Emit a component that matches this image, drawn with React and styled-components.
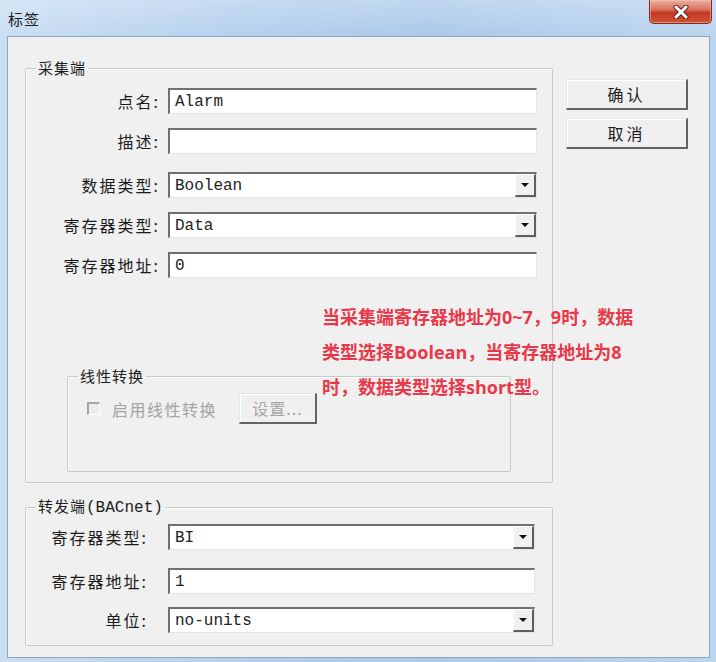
import React from 'react';
import styled, { createGlobalStyle } from 'styled-components';

const GlobalStyle = createGlobalStyle`
  html, body {
    margin: 0;
    padding: 0;
  }
  body {
    width: 716px;
    height: 662px;
    overflow: hidden;
    font-family: "Noto Sans CJK SC", "DejaVu Sans", sans-serif;
  }
`;

const Window = styled.div`
  width: 716px;
  height: 662px;
  box-sizing: border-box;
  display: flex;
  flex-direction: column;
  padding: 0 6px 4px 7px;
  background:
    linear-gradient(180deg, rgba(255,255,255,0.25) 0, rgba(255,255,255,0) 36px),
    linear-gradient(90deg, #cadef3 0%, #b4cfed 35%, #acc9ea 60%, #bcd4ef 100%);
`;

const TitleBar = styled.div`
  height: 36px;
  display: flex;
  justify-content: space-between;
  align-items: flex-start;
`;

const Title = styled.div`
  align-self: center;
  margin-left: 1px;
  font-size: 15px;
  letter-spacing: 1px;
  color: #1c1c1c;
`;

const CloseButton = styled.div`
  width: 63px;
  height: 24px;
  margin-right: -2px;
  box-sizing: border-box;
  border: 1px solid #7e2a20;
  border-top: none;
  border-radius: 0 0 5px 5px;
  background: linear-gradient(180deg, #eab0a2 0%, #d9705b 42%, #c13a22 55%, #cf5337 100%);
  box-shadow: inset 0 0 0 1px rgba(255, 200, 190, 0.5);
  display: flex;
  align-items: center;
  justify-content: center;
`;

const Client = styled.div`
  flex: 1;
  position: relative;
  display: flex;
  align-items: flex-start;
  padding: 23px 0 0 17px;
  background: #f0f0f0;
  border: 1px solid #8ea4bf;
`;

const LeftColumn = styled.div`
  display: flex;
  flex-direction: column;
  width: 528px;
`;

const Group = styled.fieldset`
  margin: ${p => p.$mt || 0}px 0 0 ${p => p.$ml || 0}px;
  padding: 0 0 ${p => p.$pb}px 0;
  width: ${p => p.$w}px;
  min-width: 0;
  box-sizing: border-box;
  border: 1px solid #c9c9c9;
  border-radius: 2px;
  box-shadow: inset 1px 1px 0 #fbfbfb;
`;

const Legend = styled.legend`
  margin-left: 10px;
  padding: 0 2px;
  font-size: 15px;
  line-height: 16px;
  letter-spacing: 1px;
  color: #1c1c1c;
`;

const Mono = styled.span`
  font-family: "Liberation Mono", monospace;
  font-size: 16px;
  letter-spacing: 0;
`;

const FieldRow = styled.div`
  display: flex;
  align-items: center;
  height: 26px;
  margin-top: ${p => p.$mt}px;
`;

const FieldLabel = styled.label`
  width: ${p => p.$w}px;
  margin-right: ${p => p.$gap}px;
  text-align: right;
  font-size: 16px;
  letter-spacing: 2px;
  color: #1b1b1b;
  white-space: nowrap;
`;

const TextBox = styled.div`
  width: ${p => p.$w}px;
  height: 26px;
  box-sizing: border-box;
  display: flex;
  align-items: center;
  justify-content: space-between;
  padding-left: 5px;
  background: #fff;
  border-top: 2px solid #707070;
  border-left: 2px solid #707070;
  border-right: 1px solid #e4e4e4;
  border-bottom: 1px solid #e4e4e4;
  font-family: "Liberation Mono", monospace;
  font-size: 16px;
  color: #222;
`;

const ArrowBox = styled.div`
  width: 21px;
  height: 100%;
  box-sizing: border-box;
  display: flex;
  align-items: center;
  justify-content: center;
  background: #f0f0f0;
  border-top: 1px solid #fff;
  border-left: 1px solid #fff;
  border-right: 2px solid #5f5f5f;
  border-bottom: 2px solid #5f5f5f;
`;

const Triangle = styled.div`
  width: 0;
  height: 0;
  border-left: 4px solid transparent;
  border-right: 4px solid transparent;
  border-top: 4px solid #111;
`;

const OptionRow = styled.div`
  display: flex;
  align-items: center;
  margin: 9px 0 0 19px;
`;

const CheckBox = styled.div`
  width: 13px;
  height: 13px;
  box-sizing: border-box;
  background: #ececec;
  border-top: 2px solid #a4a4a4;
  border-left: 2px solid #a4a4a4;
  border-right: 1px solid #fff;
  border-bottom: 1px solid #fff;
`;

const OptionText = styled.span`
  margin: 0 22px 0 12px;
  font-size: 16px;
  letter-spacing: 1.5px;
  color: #a3a3a3;
`;

const PushButton = styled.div`
  width: ${p => p.$w}px;
  height: 31px;
  box-sizing: border-box;
  display: flex;
  align-items: center;
  justify-content: center;
  background: #f0f0f0;
  border-top: 1px solid #e6e6e6;
  border-left: 1px solid #e6e6e6;
  border-right: 2px solid #646464;
  border-bottom: 2px solid #646464;
  box-shadow: inset 1px 1px 0 #fff;
  font-size: 16px;
  letter-spacing: ${p => (p.$disabled ? 1 : 3)}px;
  color: ${p => (p.$disabled ? '#a6a6a6' : '#1b1b1b')};
`;

const ButtonColumn = styled.div`
  display: flex;
  flex-direction: column;
  gap: 8px;
  margin: 19px 0 0 13px;
`;

const Note = styled.div`
  position: absolute;
  left: 314px;
  top: 263px;
  font-family: "Open Sans", "Noto Sans CJK SC", sans-serif;
  font-size: 18px;
  font-weight: 700;
  line-height: 35px;
  color: #e8394b;
  white-space: nowrap;
`;

const Field = ({ label, labelW, gap, width, mt, value, combo }) => (
  <FieldRow $mt={mt}>
    <FieldLabel $w={labelW} $gap={gap}>{label}</FieldLabel>
    <TextBox $w={width}>
      <span>{value}</span>
      {combo && (
        <ArrowBox>
          <Triangle />
        </ArrowBox>
      )}
    </TextBox>
  </FieldRow>
);

const source = [
  { label: '点名:', value: 'Alarm', mt: 12 },
  { label: '描述:', value: '', mt: 14 },
  { label: '数据类型:', value: 'Boolean', mt: 18, combo: true },
  { label: '寄存器类型:', value: 'Data', mt: 14, combo: true },
  { label: '寄存器地址:', value: '0', mt: 14 },
];

const forward = [
  { label: '寄存器类型:', value: 'BI', mt: 8, combo: true },
  { label: '寄存器地址:', value: '1', mt: 18 },
  { label: '单位:', value: 'no-units', mt: 13, combo: true },
];

export default function App() {
  return (
    <>
      <GlobalStyle />
      <Window>
        <TitleBar>
          <Title>标签</Title>
          <CloseButton>
            <svg width="16" height="14" viewBox="0 0 16 14">
              <path d="M3 2 L13 12 M13 2 L3 12" stroke="#6b1d12" strokeWidth="5" strokeLinecap="round" />
              <path d="M3 2 L13 12 M13 2 L3 12" stroke="#fff" strokeWidth="3" strokeLinecap="round" />
            </svg>
          </CloseButton>
        </TitleBar>
        <Client>
          <LeftColumn>
            <Group $w={528} $pb={10}>
              <Legend>采集端</Legend>
              {source.map(f => (
                <Field key={f.label} labelW={134} gap={8} width={369} {...f} />
              ))}
              <Group $w={444} $ml={41} $mt={90} $pb={47}>
                <Legend>线性转换</Legend>
                <OptionRow>
                  <CheckBox />
                  <OptionText>启用线性转换</OptionText>
                  <PushButton $w={78} $disabled>设置...</PushButton>
                </OptionRow>
              </Group>
            </Group>
            <Group $w={528} $mt={15} $pb={12}>
              <Legend>转发端<Mono>(BACnet)</Mono></Legend>
              {forward.map(f => (
                <Field key={f.label} labelW={122} gap={20} width={367} {...f} />
              ))}
            </Group>
          </LeftColumn>
          <ButtonColumn>
            <PushButton $w={122}>确认</PushButton>
            <PushButton $w={122}>取消</PushButton>
          </ButtonColumn>
          <Note>
            当采集端寄存器地址为0~7，9时，数据<br />
            类型选择Boolean，当寄存器地址为8<br />
            时，数据类型选择short型。
          </Note>
        </Client>
      </Window>
    </>
  );
}
